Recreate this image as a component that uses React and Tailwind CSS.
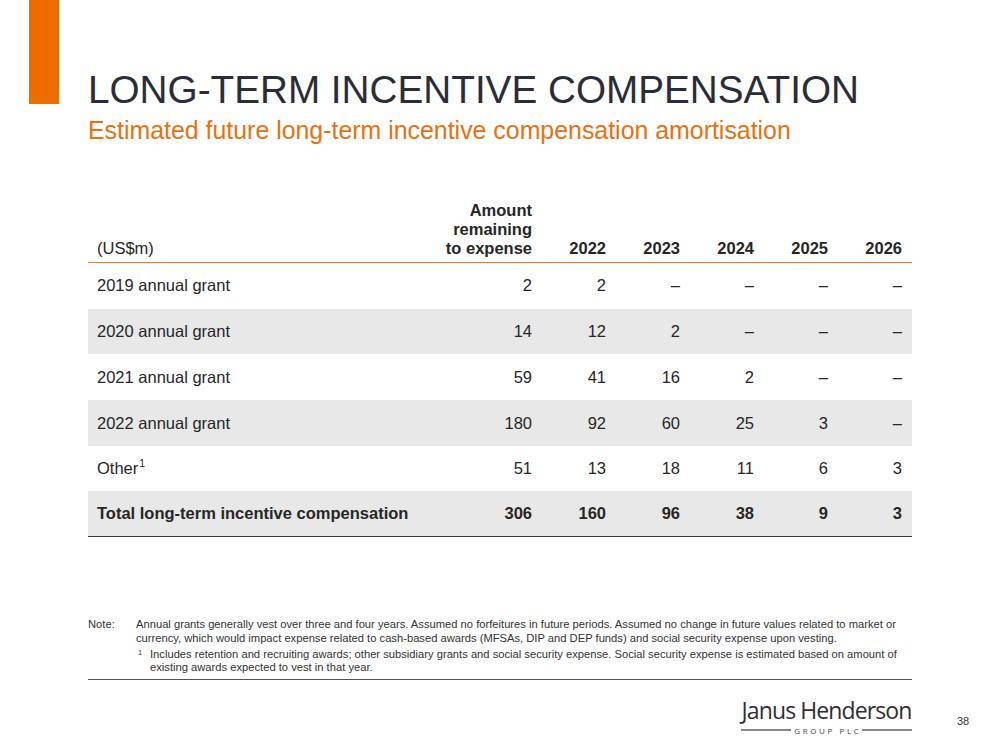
import React from "react";

const rows = [
  { label: "2019 annual grant", vals: ["2", "2", "–", "–", "–", "–"], grey: false },
  { label: "2020 annual grant", vals: ["14", "12", "2", "–", "–", "–"], grey: true },
  { label: "2021 annual grant", vals: ["59", "41", "16", "2", "–", "–"], grey: false },
  { label: "2022 annual grant", vals: ["180", "92", "60", "25", "3", "–"], grey: true },
  { label: "Other", sup: "1", vals: ["51", "13", "18", "11", "6", "3"], grey: false },
];

const gridCols = "grid grid-cols-[354px_100px_74px_74px_74px_74px_74px]";

export default function App() {
  return (
    <div className="w-[999px] h-[750px] bg-white flex overflow-hidden font-['Liberation_Sans',Arial,sans-serif] text-[#262626]">
      <div className="ml-[29px] w-[30px] h-[104px] bg-[#EC6C00] shrink-0" />
      <div className="ml-[29px] w-[824px] shrink-0 flex flex-col">
        <h1 className="mt-[71px] text-[38.7px] leading-[38px] text-[#2a2d39] whitespace-nowrap">
          LONG-TERM INCENTIVE COMPENSATION
        </h1>
        <h2 className="mt-[9px] text-[24.9px] leading-[25px] text-[#E8710F] whitespace-nowrap">
          Estimated future long-term incentive compensation amortisation
        </h2>

        <div className="mt-[58px] flex flex-col text-[16.5px]">
          <div className={`${gridCols} items-end font-bold leading-[19px] pb-[4px] border-b-[1.5px] border-[#EE7A1E]`}>
            <div className="pl-[9px] font-normal">(US$m)</div>
            <div className="pr-[10px] text-right">
              Amount
              <br />
              remaining
              <br />
              to expense
            </div>
            <div className="pr-[10px] text-right">2022</div>
            <div className="pr-[10px] text-right">2023</div>
            <div className="pr-[10px] text-right">2024</div>
            <div className="pr-[10px] text-right">2025</div>
            <div className="pr-[10px] text-right">2026</div>
          </div>
          {rows.map((r) => (
            <div
              key={r.label}
              className={`${gridCols} items-center h-[45.7px] ${r.grey ? "bg-[#e8e8e8]" : "bg-white"}`}
            >
              <div className="pl-[9px]">
                {r.label}
                {r.sup && <span className="text-[10.5px] relative top-[-7px] ml-[1px]">{r.sup}</span>}
              </div>
              {r.vals.map((v, i) => (
                <div key={i} className="pr-[10px] text-right">
                  {v}
                </div>
              ))}
            </div>
          ))}
          <div className={`${gridCols} items-center h-[45.7px] bg-[#e8e8e8] font-bold border-b-[1.5px] border-[#3a3a3a]`}>
            <div className="pl-[9px] whitespace-nowrap">Total long-term incentive compensation</div>
            {["306", "160", "96", "38", "9", "3"].map((v, i) => (
              <div key={i} className="pr-[10px] text-right">
                {v}
              </div>
            ))}
          </div>
        </div>

        <div className="mt-[81px] text-[11.2px] leading-[13.5px] text-[#333] flex flex-col pb-[4px] border-b-[1.5px] border-[#555]">
          <div className="flex">
            <div className="w-[48px] shrink-0">Note:</div>
            <div>
              Annual grants generally vest over three and four years. Assumed no forfeitures in future periods. Assumed no change in future values related to market or currency, which would impact expense related to cash-based awards (MFSAs, DIP and DEP funds) and social security expense upon vesting.
            </div>
          </div>
          <div className="flex mt-[2.5px]">
            <div className="w-[50px] shrink-0" />
            <div className="w-[12px] shrink-0 text-[7.5px] leading-[10px]">1</div>
            <div>
              Includes retention and recruiting awards; other subsidiary grants and social security expense. Social security expense is estimated based on amount of existing awards expected to vest in that year.
            </div>
          </div>
        </div>

        <div className="self-end mt-[19px] flex flex-col items-stretch w-[171px]">
          <div className="text-[23px] leading-[23px] font-['Open_Sans',sans-serif] font-medium tracking-[-0.9px] text-[#2e2e36] whitespace-nowrap text-center">
            Janus Henderson
          </div>
          <div className="mt-[4px] flex items-center gap-[3px]">
            <div className="flex-1 h-[1.5px] bg-[#8a8a8a]" />
            <div className="text-[8px] leading-[9px] tracking-[2.6px] mr-[-2.6px] text-[#444] font-['Open_Sans',sans-serif]">GROUP PLC</div>
            <div className="flex-1 h-[1.5px] bg-[#8a8a8a]" />
          </div>
        </div>
      </div>
      <div className="pl-[45px] pt-[714px] text-[11px] leading-[14px] text-[#333]">38</div>
    </div>
  );
}
